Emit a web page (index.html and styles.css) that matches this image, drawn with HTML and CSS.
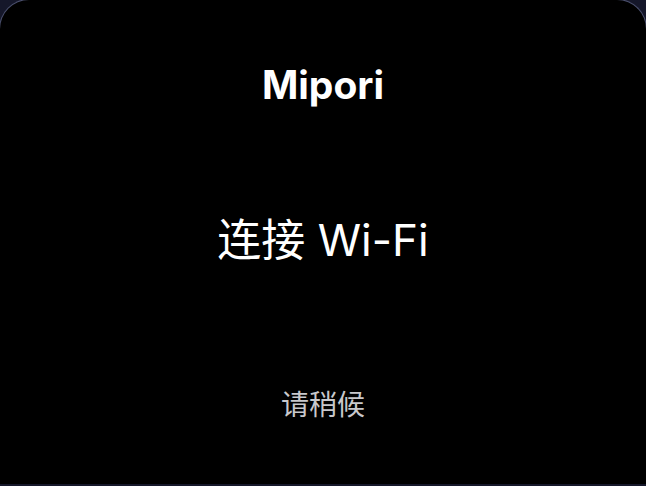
FILE: index.html
```html
<!DOCTYPE html>
<html lang="zh-CN">
<head>
<meta charset="utf-8">
<link rel="stylesheet" href="styles.css">
</head>
<body>
<main class="screen">
  <h1 class="brand">Mipori</h1>
  <h2 class="title">连接 Wi-Fi</h2>
  <p class="hint">请稍候</p>
</main>
</body>
</html>
```
FILE: styles.css
```css
html, body {
  margin: 0;
  padding: 0;
  height: 100%;
}
body {
  background: #15172a;
  overflow: hidden;
  font-family: "Inter", "Noto Sans CJK SC", sans-serif;
}
.screen {
  box-sizing: border-box;
  height: 485px;
  margin: -1px -1px 0;
  background: #000;
  border: 1px solid #4a4f6c;
  border-bottom: none;
  border-radius: 30px 30px 0 0;
  display: flex;
  flex-direction: column;
  align-items: center;
  color: #fff;
}
.brand {
  margin: 59px 0 0;
  font-size: 39px;
  font-weight: 700;
  line-height: 52px;
}
.title {
  margin: 101px 0 0;
  font-size: 44px;
  font-weight: 400;
  line-height: 56px;
}
.hint {
  margin: 119px 0 0;
  font-size: 28px;
  line-height: 36px;
  color: #c8c8cc;
}
```
